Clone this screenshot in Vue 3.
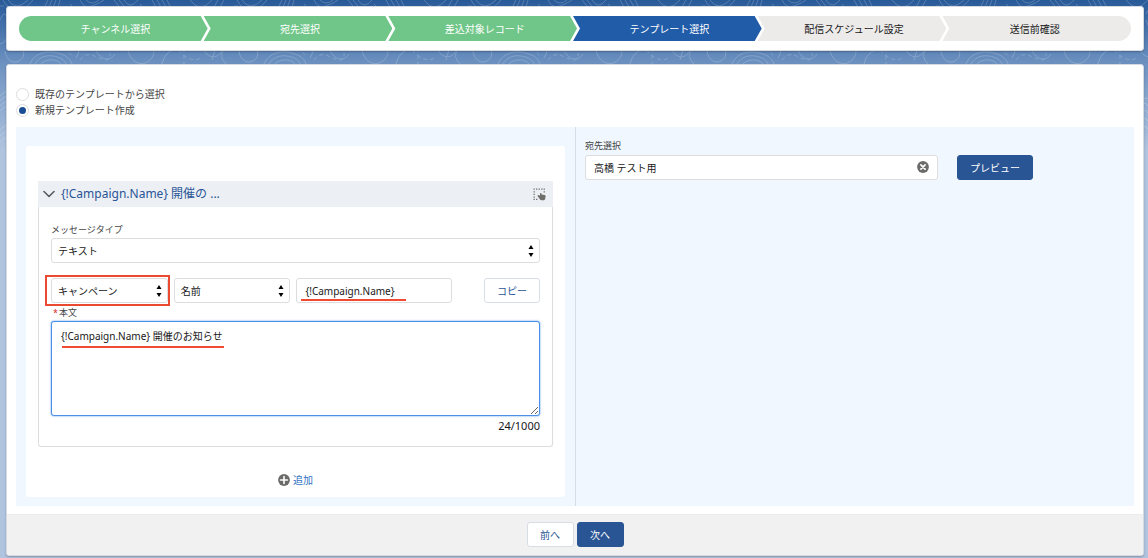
<script setup>
import { ref, computed } from 'vue'

const steps = [
  { label: 'チャンネル選択', state: 'done' },
  { label: '宛先選択', state: 'done' },
  { label: '差込対象レコード', state: 'done' },
  { label: 'テンプレート選択', state: 'current' },
  { label: '配信スケジュール設定', state: 'todo' },
  { label: '送信前確認', state: 'todo' },
]

const mode = ref('new')
const type = ref('テキスト')
const source = ref('キャンペーン')
const field = ref('名前')
const token = ref('{!Campaign.Name}')
const body = ref('{!Campaign.Name} 開催のお知らせ')
const recipient = ref('高橋 テスト用')
const count = computed(() => body.value.length)
</script>

<template>
  <div class="page">
    <svg class="contours" aria-hidden="true">
      <defs>
        <pattern id="contour" width="234" height="150" patternUnits="userSpaceOnUse">
          <g fill="none" stroke="#fff" stroke-width="1">
            <path d="M8 0q8 12 20 0M3 0q12 22 30 0M48 0l-6 12M52 0l-6 14M56 0l-6 16M60 0l-5 18M80 0q4 9 12 6t12-6M86 0q6 6 13 0M114 0l8 10M119 0l8 10M124 0q6 10 14 0M152 0l8 14M157 0l8 14M162 0l8 14M167 0l7 14M190 0q10 14 22 0M218 0l-8 14M224 0l-8 14" />
            <path d="M5 51c1 9 8 13 14 10s6-10 2-16M30 64c3-8 12-13 22-12s18 5 20 12M35 64c4-7 11-9 18-8s12 4 13 8M41 64c4-5 16-6 20 0M76 58q5-8 2-13M96 50c4 10 14 12 19 4M128 50c2 12 14 18 22 10s2-12-4-18M162 64c3-12 10-14 18-16M204 50c4 9 15 9 18 0M226 64q-8-8-2-14" />
            <path stroke-dasharray="4 3" d="M62 50q9 1 10 8M80 60q7-9 16-3l8 3q7 1 6-7M178 50q14 15 24 7M184 48v16M0 6h8M140 4l8 9M70 4l8 8" />
            <path d="M0 20q6-14 8 4t-8 20M0 96q7-8 9-1M0 101q7-8 9-1M0 106q7-8 9-1M0 111q7-8 9-1M0 130q5-6 9-4M0 136q5-6 9-4M0 142q5-6 9-4M210 20q10 20 2 40M206 100q9-7 10 9M202 105q9-7 14 9M202 112q9-7 14 9M202 120q9-7 14 9M202 128q9-7 14 9" />
          </g>
        </pattern>
      </defs>
      <rect width="100%" height="150" fill="url(#contour)" />
    </svg>

    <nav class="card path-card" aria-label="進捗">
      <ol class="path">
        <li v-for="s in steps" :key="s.label" :class="s.state" :aria-current="s.state === 'current' ? 'step' : undefined">
          {{ s.label }}
        </li>
      </ol>
    </nav>

    <main class="card main-card">
      <div class="modes" role="radiogroup" aria-label="テンプレート">
        <label><input v-model="mode" type="radio" name="mode" value="existing" />既存のテンプレートから選択</label>
        <label><input v-model="mode" type="radio" name="mode" value="new" />新規テンプレート作成</label>
      </div>

      <div class="columns">
        <section class="editor">
          <div class="sheet">
            <div class="message">
              <header>
                <button type="button" class="toggle">
                  <svg width="12" height="8" viewBox="0 0 12 8" aria-hidden="true"><path d="M1 1.5l5 5 5-5" fill="none" stroke="#5b5b5b" stroke-width="1.6" stroke-linecap="round" stroke-linejoin="round" /></svg>
                  <span>{!Campaign.Name} 開催の ...</span>
                </button>
                <button type="button" class="drag" aria-label="移動">
                  <svg width="13" height="13" viewBox="0 0 13 13" aria-hidden="true">
                    <g fill="#706e6b">
                      <path d="M.5.5h1.300v1.300H.5zM3 .5h1.300v1.300H3zM5.600.5h1.300v1.300H5.600zM8.200.5h1.300v1.300H8.200zM10.600.5h1.300v1.300h-1.300zM.5 3.200h1.300v1.300H.5zM.5 5.800h1.300v1.300H.5zM.5 8.400h1.300v1.300H.5zM.5 10.800h1.300v1.300H.5zM3 10.800h1.300v1.300H3zM10.600 3.200h1.300v1.300h-1.300z" />
                      <path d="M4.800 7.200c.8-.5 1.500 0 2.200.7V5.700c0-1 1.500-1 1.600 0v.8l3 .5c.9.200 1.100.7 1 1.500l-.4 2.300c-.2 1-.7 1.400-1.500 1.400H8.400c-.7 0-1-.3-1.400-.8L4.700 8.200c-.3-.4-.3-.8.1-1z" />
                    </g>
                  </svg>
                </button>
              </header>

              <div class="fields">
                <label for="type" class="label">メッセージタイプ</label>
                <div class="select">
                  <select id="type" v-model="type"><option>テキスト</option></select>
                  <svg width="6" height="14" viewBox="0 0 6 14" aria-hidden="true"><path d="M3 1l2.500 4h-5zM3 13L.5 9h5z" /></svg>
                </div>

                <div class="merge">
                  <div class="select marked">
                    <select v-model="source" aria-label="オブジェクト"><option>キャンペーン</option></select>
                    <svg width="6" height="14" viewBox="0 0 6 14" aria-hidden="true"><path d="M3 1l2.500 4h-5zM3 13L.5 9h5z" /></svg>
                  </div>
                  <div class="select">
                    <select v-model="field" aria-label="項目"><option>名前</option></select>
                    <svg width="6" height="14" viewBox="0 0 6 14" aria-hidden="true"><path d="M3 1l2.500 4h-5zM3 13L.5 9h5z" /></svg>
                  </div>
                  <div class="token underlined">
                    <input v-model="token" type="text" aria-label="差込項目" />
                  </div>
                  <button type="button" class="btn copy">コピー</button>
                </div>

                <label for="body" class="label required"><span class="star">*</span>本文</label>
                <div class="body underlined">
                  <textarea id="body" v-model="body"></textarea>
                </div>
                <p class="count">{{ count }}/1000</p>
              </div>
            </div>

            <button type="button" class="add">
              <svg width="12" height="12" viewBox="0 0 12 12" aria-hidden="true"><circle cx="6" cy="6" r="5.900" fill="#6b6b69" /><path d="M6 2.600v6.800M2.600 6h6.800" stroke="#fff" stroke-width="1.600" stroke-linecap="round" /></svg>
              追加
            </button>
          </div>
        </section>

        <section class="preview">
          <label for="recipient" class="label">宛先選択</label>
          <div class="preview-row">
            <div class="lookup">
              <input id="recipient" v-model="recipient" type="text" />
              <button type="button" aria-label="クリア">
                <svg width="12" height="12" viewBox="0 0 12 12" aria-hidden="true"><circle cx="6" cy="6" r="5.900" fill="#6b6b69" /><path d="M3.900 3.900l4.200 4.200M8.100 3.900L3.900 8.100" stroke="#fff" stroke-width="1.700" stroke-linecap="round" /></svg>
              </button>
            </div>
            <button type="button" class="btn brand show">プレビュー</button>
          </div>
        </section>
      </div>

      <footer>
        <button type="button" class="btn">前へ</button>
        <button type="button" class="btn brand">次へ</button>
      </footer>
    </main>
  </div>
</template>

<style>
body {
  background: #b0c4df;
}
</style>

<style scoped>
.page,
.page * {
  box-sizing: border-box;
}

.page {
  position: relative;
  min-height: 100vh;
  padding: 6px 4px 2px 6px;
  background: linear-gradient(to bottom, #295a98 0, #3565a2 12px, #6d92c1 64px, #b0c4df 150px);
  color: #181818;
  font-family: "Noto Sans", "Noto Sans CJK JP", sans-serif;
  font-size: 10px;
  line-height: 16px;
}

button,
input,
select,
textarea {
  margin: 0;
  font: inherit;
  color: inherit;
}

button {
  padding: 0;
  border: 0;
  background: none;
  cursor: pointer;
}

.contours {
  position: absolute;
  top: 0;
  left: 0;
  width: 100%;
  height: 150px;
  opacity: 0.2;
}

.card {
  position: relative;
  border: 1px solid #d5dae2;
  border-radius: 3px;
  background: #fff;
  box-shadow: 0 1px 2px rgba(0, 0, 0, 0.25);
}

.path-card {
  padding: 9px 12px;
}

.path {
  display: flex;
  margin: 0;
  padding: 0;
  list-style: none;
}

.path li {
  flex: 1 1 0;
  padding: 1px 0 0 4px;
  line-height: 24px;
  text-align: center;
  background: #ecebea;
  clip-path: polygon(0 0, calc(100% - 7px) 0, 100% 50%, calc(100% - 7px) 100%, 0 100%, 7px 50%);
}

.path li + li {
  margin-left: -4px;
}

.path li:first-child {
  border-radius: 13px 0 0 13px;
  clip-path: polygon(0 0, calc(100% - 7px) 0, 100% 50%, calc(100% - 7px) 100%, 0 100%);
}

.path li:last-child {
  padding: 1px 4px 0 0;
  border-radius: 0 13px 13px 0;
  clip-path: polygon(0 0, 100% 0, 100% 100%, 0 100%, 7px 50%);
}

.path .done {
  background: #70c688;
  color: #fff;
}

.path .current {
  background: #215ca9;
  color: #fff;
}

.main-card {
  margin-top: 13px;
}

.modes {
  display: flex;
  flex-direction: column;
  align-items: flex-start;
  padding: 21px 9px 9px;
}

.modes label {
  display: flex;
  align-items: center;
  gap: 6px;
  color: #444;
}

.modes input {
  display: grid;
  place-items: center;
  width: 13px;
  height: 13px;
  border: 1px solid #ddd;
  border-radius: 50%;
  appearance: none;
  background: #fff;
}

.modes input:checked::before {
  content: "";
  width: 7px;
  height: 7px;
  border-radius: 50%;
  background: #1b4d95;
}

.columns {
  display: grid;
  grid-template-columns: 560fr 558fr;
  margin: 0 9px 8px;
  background: #f0f7fe;
}

.editor {
  padding: 19px 10px 9px;
  border-right: 1px solid #d9dde2;
}

.sheet {
  padding: 35px 12px 7px;
  border-radius: 3px;
  background: #fff;
  text-align: center;
}

.message {
  text-align: left;
}

.message header {
  display: flex;
  align-items: center;
  justify-content: space-between;
  height: 26px;
  padding: 0 7px 0 5px;
  background: #ecf0f5;
}

.toggle {
  display: flex;
  align-items: center;
  gap: 6px;
  color: #2a5595;
  font-size: 12px;
}

.drag {
  display: flex;
}

.fields {
  padding: 15px 12px 12px;
  border: 1px solid #ddd;
  border-top: 0;
  border-radius: 0 0 3px 3px;
}

.label {
  display: block;
  color: #444;
  font-size: 9px;
}

.select {
  position: relative;
}

.select select,
.token input,
.lookup input {
  display: block;
  width: 100%;
  height: 25px;
  padding: 0 8px;
  border: 1px solid #ddd;
  border-radius: 3px;
  outline: 0;
  background: #fff;
}

.select select {
  padding: 0 6px;
  appearance: none;
}

.select svg {
  position: absolute;
  top: 6px;
  right: 6px;
  pointer-events: none;
}

.merge {
  display: flex;
  gap: 6px;
  margin-top: 15px;
}

.merge .select {
  flex: 3 1 0;
}

.merge .token {
  flex: 4 1 0;
}

.marked::after {
  content: "";
  position: absolute;
  inset: -3px -2px -3px -6px;
  border: 2px solid #ea4a32;
  pointer-events: none;
}

.underlined {
  position: relative;
}

.underlined::after {
  content: "";
  position: absolute;
  height: 2px;
  background: #f04a30;
  pointer-events: none;
}

.token.underlined::after {
  top: 21px;
  left: 5px;
  width: 105px;
}

.body.underlined::after {
  top: 25px;
  left: 11px;
  width: 162px;
}

.btn {
  height: 25px;
  padding: 0 12px;
  border: 1px solid #d8dde6;
  border-radius: 3px;
  background: #fff;
  color: #2a5595;
}

.brand {
  border-color: #2a5595;
  background: #2a5595;
  color: #fff;
}

.copy {
  width: 56px;
  margin-left: 26px;
}

.required {
  margin-top: 2px;
  padding-left: 2px;
}

.star {
  margin-right: 1px;
  color: #d8281f;
}

.body textarea {
  display: block;
  width: 100%;
  height: 95px;
  padding: 6px 9px;
  border: 1px solid #4a90ea;
  border-radius: 3px;
  outline: 0;
  box-shadow: 0 0 2px #4a90ea;
  resize: vertical;
}

.count {
  margin: 2px 0 0;
  font-size: 11px;
  text-align: right;
}

.add {
  display: inline-flex;
  align-items: center;
  gap: 3px;
  margin-top: 25px;
  color: #2f6fc4;
}

.preview {
  padding: 11px 9px;
}

.preview .label {
  padding-bottom: 1px;
}

.preview-row {
  display: grid;
  grid-template-columns: 21fr 10fr;
  gap: 19px;
}

.lookup {
  position: relative;
}

.lookup button {
  position: absolute;
  top: 6px;
  right: 9px;
  display: flex;
}

.show {
  justify-self: start;
}

footer {
  display: flex;
  justify-content: center;
  gap: 3px;
  padding: 7px 0 8px;
  border-top: 1px solid #ececec;
  border-radius: 0 0 3px 3px;
  background: #f1f1f1;
}

footer .btn {
  min-width: 47px;
}
</style>
